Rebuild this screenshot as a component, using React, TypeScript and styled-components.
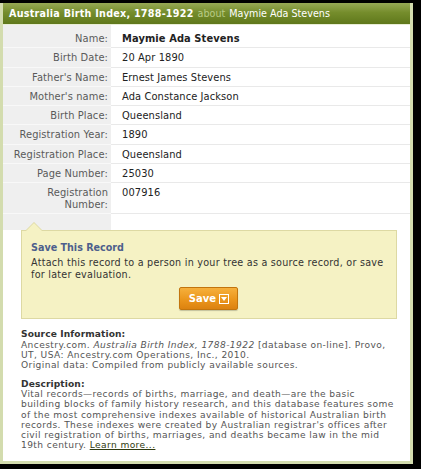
import React from 'react'
import styled, { createGlobalStyle } from 'styled-components'

const GlobalStyle = createGlobalStyle`
  html, body {
    margin: 0;
    padding: 0;
    background: #000;
  }
  body {
    font-family: 'DejaVu Sans', Verdana, sans-serif;
  }
`

// ============== FRAME ==============
const Page = styled.div`
  width: 421px;
  height: 469px;
  padding-top: 3px;
  box-sizing: border-box;
  background: #000;
`

const Panel = styled.div`
  width: 413px;
  height: 461px;
  box-sizing: border-box;
  background: #fff;
  border: 3px solid #d3dcae;
  border-top: none;
  display: flex;
  flex-direction: column;
  overflow: hidden;
`

const Header = styled.div`
  height: 21px;
  padding: 0 6px;
  display: flex;
  align-items: center;
  gap: 4px;
  background: linear-gradient(to bottom, #97a955 0%, #758d2c 45%, #5f781b 100%);
  border-bottom: 1px solid #e9eed6;
  color: #fff;
  font-size: 9.6px;
  white-space: nowrap;
`

const HeaderTitle = styled.span`
  font-weight: bold;
  letter-spacing: 0.25px;
`

const HeaderAbout = styled.span`
  color: #b9cb86;
`

// ============== TABLE ==============
const Table = styled.div`
  display: grid;
  grid-template-columns: 108px 1fr;
  padding-top: 4px;
  padding-bottom: 16px;
  background: linear-gradient(to right, #efefef 108px, #fff 108px);
  font-size: 9.9px;
  line-height: 11.3px;
  letter-spacing: 0.1px;
`

const Label = styled.div`
  text-align: right;
  padding: 4px 3px 3px 6px;
  color: #5a5a5a;
  border-bottom: 1px solid #f8f8f8;
`

const Value = styled.div<{ $bold?: boolean }>`
  padding: 4px 8px 3px 11px;
  color: #222;
  font-weight: ${(p) => (p.$bold ? 'bold' : 'normal')};
  border-bottom: 1px solid #e9e9e9;
`

// ============== CALLOUT ==============
const CalloutWrap = styled.div`
  padding: 0 13px 0 18px;
`

const Callout = styled.div`
  position: relative;
  background: #f5f2c4;
  border: 1px solid #ddd9a3;
  padding: 11px 10px 8px 9px;
  font-size: 9.6px;
  line-height: 11.5px;
  letter-spacing: 0.25px;
  color: #333;

  &::before,
  &::after {
    content: '';
    position: absolute;
    left: 3px;
    border-style: solid;
    border-color: transparent;
  }
  &::before {
    top: -9px;
    border-width: 0 9px 9px 9px;
    border-bottom-color: #ddd9a3;
  }
  &::after {
    top: -8px;
    left: 4px;
    border-width: 0 8px 8px 8px;
    border-bottom-color: #f5f2c4;
  }
`

const CalloutTitle = styled.div`
  color: #4d5f8c;
  font-weight: bold;
  letter-spacing: 0;
  margin-bottom: 4px;
`

const ButtonRow = styled.div`
  display: flex;
  justify-content: center;
  margin-top: 7px;
`

const SaveButton = styled.button`
  display: flex;
  align-items: center;
  gap: 3px;
  height: 23px;
  padding: 0 8px 0 9px;
  border: 1px solid #c2750e;
  border-radius: 2px;
  background: linear-gradient(to bottom, #f6b03c 0%, #eb961c 55%, #dc8210 100%);
  color: #fff;
  font-family: inherit;
  font-size: 10px;
  font-weight: bold;
  box-shadow: 0 1px 1px rgba(0, 0, 0, 0.2);
`

const DropIcon = styled.span`
  width: 8px;
  height: 8px;
  border: 1px solid #fff;
  display: flex;
  align-items: center;
  justify-content: center;

  &::after {
    content: '';
    border-style: solid;
    border-width: 4px 3px 0 3px;
    border-color: #fff transparent transparent transparent;
  }
`

// ============== SOURCE INFO ==============
const Info = styled.div`
  padding: 10px 8px 0 18px;
  font-size: 9.1px;
  line-height: 10.3px;
  letter-spacing: 0.4px;
  color: #555;
  white-space: nowrap;
`

const InfoBlock = styled.div`
  margin-bottom: 8px;
`

const InfoTitle = styled.div`
  font-weight: bold;
  letter-spacing: 0.1px;
  color: #333;
`

const LearnMore = styled.a`
  color: #2f3a10;
  text-decoration: underline;
`

const rows: [string, string, boolean?][] = [
  ['Name:', 'Maymie Ada Stevens', true],
  ['Birth Date:', '20 Apr 1890'],
  ["Father's Name:", 'Ernest James Stevens'],
  ["Mother's name:", 'Ada Constance Jackson'],
  ['Birth Place:', 'Queensland'],
  ['Registration Year:', '1890'],
  ['Registration Place:', 'Queensland'],
  ['Page Number:', '25030'],
  ['Registration Number:', '007916']
]

export default function App() {
  return (
    <Page>
      <GlobalStyle />
      <Panel>
        <Header>
          <HeaderTitle>Australia Birth Index, 1788-1922</HeaderTitle>
          <HeaderAbout>about</HeaderAbout>
          <span>Maymie Ada Stevens</span>
        </Header>

        <Table>
          {rows.map(([label, value, bold]) => (
            <React.Fragment key={label}>
              <Label>{label}</Label>
              <Value $bold={bold}>{value}</Value>
            </React.Fragment>
          ))}
        </Table>

        <CalloutWrap>
          <Callout>
            <CalloutTitle>Save This Record</CalloutTitle>
            Attach this record to a person in your tree as a source record, or save for
            later evaluation.
            <ButtonRow>
              <SaveButton>
                Save <DropIcon />
              </SaveButton>
            </ButtonRow>
          </Callout>
        </CalloutWrap>

        <Info>
          <InfoBlock>
            <InfoTitle>Source Information:</InfoTitle>
            Ancestry.com. <i>Australia Birth Index, 1788-1922</i> [database on-line]. Provo,
            <br />
            UT, USA: Ancestry.com Operations, Inc., 2010.
            <br />
            Original data: Compiled from publicly available sources.
          </InfoBlock>
          <InfoBlock>
            <InfoTitle>Description:</InfoTitle>
            Vital records—records of births, marriage, and death—are the basic
            <br />
            building blocks of family history research, and this database features some
            <br />
            of the most comprehensive indexes available of historical Australian birth
            <br />
            records. These indexes were created by Australian registrar's offices after
            <br />
            civil registration of births, marriages, and deaths became law in the mid
            <br />
            19th century. <LearnMore href="#">Learn more...</LearnMore>
          </InfoBlock>
        </Info>
      </Panel>
    </Page>
  )
}
